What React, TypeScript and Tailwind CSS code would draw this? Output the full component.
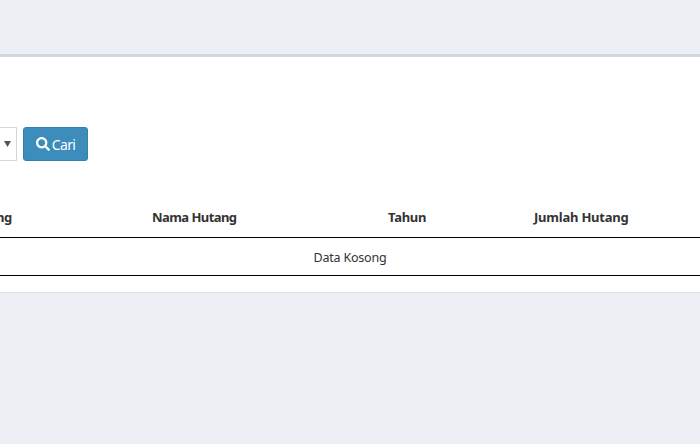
import { FaSearch } from "react-icons/fa";

export default function App() {
  return (
    <div className="w-[700px] h-[444px] overflow-hidden bg-[#ecf0f5] pt-[54px] font-['Noto_Sans',sans-serif] text-[#333]">
      <div className="h-[239px] bg-white border-t-[3px] border-b border-[#d2d6de] border-b-[#dcdfe3]">
        <div className="flex items-stretch gap-[6px] pt-[70px] h-[104px]">
          <div className="w-[17px] h-[34px] bg-white border border-l-0 border-[#d2d6de] flex items-center justify-end pr-[5px]">
            <svg width="7" height="6" viewBox="0 0 7 6"><path d="M0 0h7L3.5 6z" fill="#555" /></svg>
          </div>
          <button className="w-[65px] h-[34px] bg-[#3c8dbc] border border-[#367fa9] rounded-[3px] text-white text-[14px] flex items-center justify-center gap-[2px] tracking-[-0.6px]">
            <FaSearch className="w-[14px] h-[14px]" />
            <span>Cari</span>
          </button>
        </div>
        <div className="mt-[44px]">
          <div className="grid grid-cols-[152px_236px_146px_1fr] h-[33px] border-b border-black text-[13px] font-bold leading-[25px] tracking-[-0.3px] whitespace-nowrap">
            <div className="flex justify-end pr-[140px]">Kode Hutang</div>
            <div className="tracking-[-0.56px]">Nama Hutang</div>
            <div>Tahun</div>
            <div className="tracking-[-0.22px]">Jumlah Hutang</div>
          </div>
          <div className="h-[38px] border-b border-black flex items-center justify-center pt-[3px] text-[12.5px] tracking-[-0.2px]">Data Kosong</div>
        </div>
      </div>
    </div>
  );
}
